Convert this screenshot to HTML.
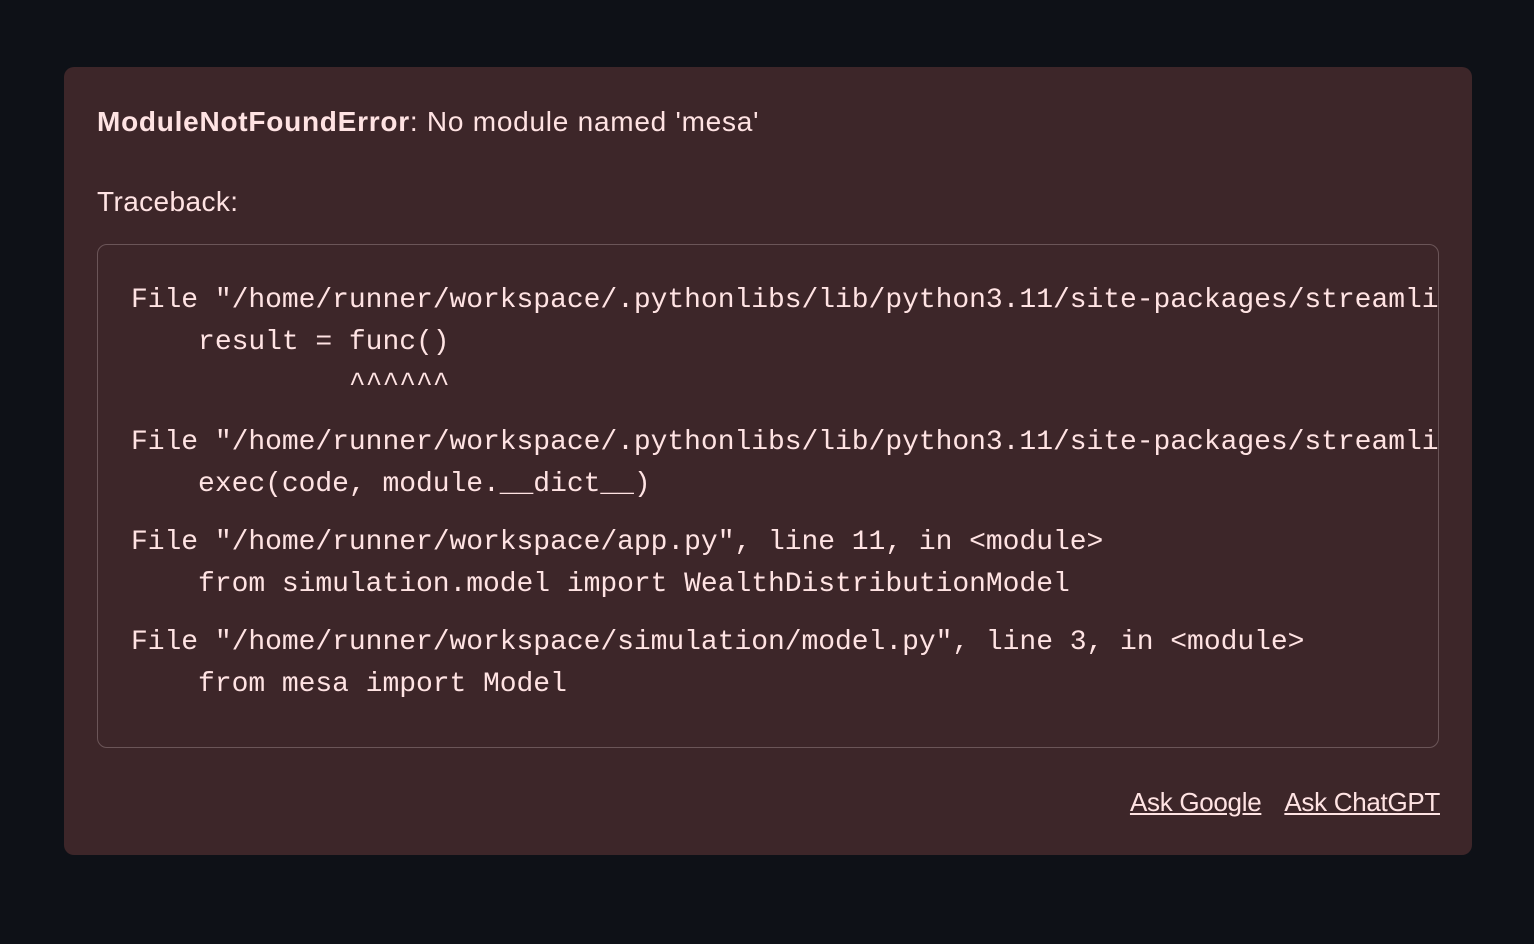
<!DOCTYPE html>
<html><head><meta charset="utf-8"><style>
html,body{margin:0;padding:0;background:#0e1117;width:1534px;height:944px;overflow:hidden}
.card{position:absolute;left:64px;top:67px;width:1408px;height:788px;background:#3d2629;border-radius:10px;color:#ffe3e3;font-family:"Liberation Sans",sans-serif}
.h{position:absolute;left:33px;top:39px;font-size:28px;white-space:nowrap;letter-spacing:0.75px}
.t{position:absolute;left:33px;top:119px;font-size:28px;letter-spacing:0.4px}
.code{position:absolute;left:33px;top:177px;width:1340px;height:502px;border:1.5px solid #6b5558;border-radius:10px;overflow:hidden}
pre{margin:0;position:absolute;left:33px;top:35px;font-family:"Liberation Mono",monospace;font-size:28px;line-height:42px;color:#ffe3e3;white-space:pre;letter-spacing:-0.04px}
.g{margin-bottom:16px}
.links{position:absolute;right:32px;top:720px;font-size:26px;letter-spacing:-0.3px}
.links span{text-decoration:underline;margin-left:23px}
</style></head><body>
<div class="card">
<div class="h"><b>ModuleNotFoundError</b>: No module named 'mesa'</div>
<div class="t">Traceback:</div>
<div class="code"><pre><div class="g">File "/home/runner/workspace/.pythonlibs/lib/python3.11/site-packages/streamlit/runtime/scriptrunner/exec_code.py"
    result = func()
             ^^^^^^</div><div class="g">File "/home/runner/workspace/.pythonlibs/lib/python3.11/site-packages/streamlit/runtime/scriptrunner/script_runner.py"
    exec(code, module.__dict__)</div><div class="g">File "/home/runner/workspace/app.py", line 11, in &lt;module&gt;
    from simulation.model import WealthDistributionModel</div><div>File "/home/runner/workspace/simulation/model.py", line 3, in &lt;module&gt;
    from mesa import Model</div></pre></div>
<div class="links"><span>Ask Google</span><span>Ask ChatGPT</span></div>
</div>
</body></html>
